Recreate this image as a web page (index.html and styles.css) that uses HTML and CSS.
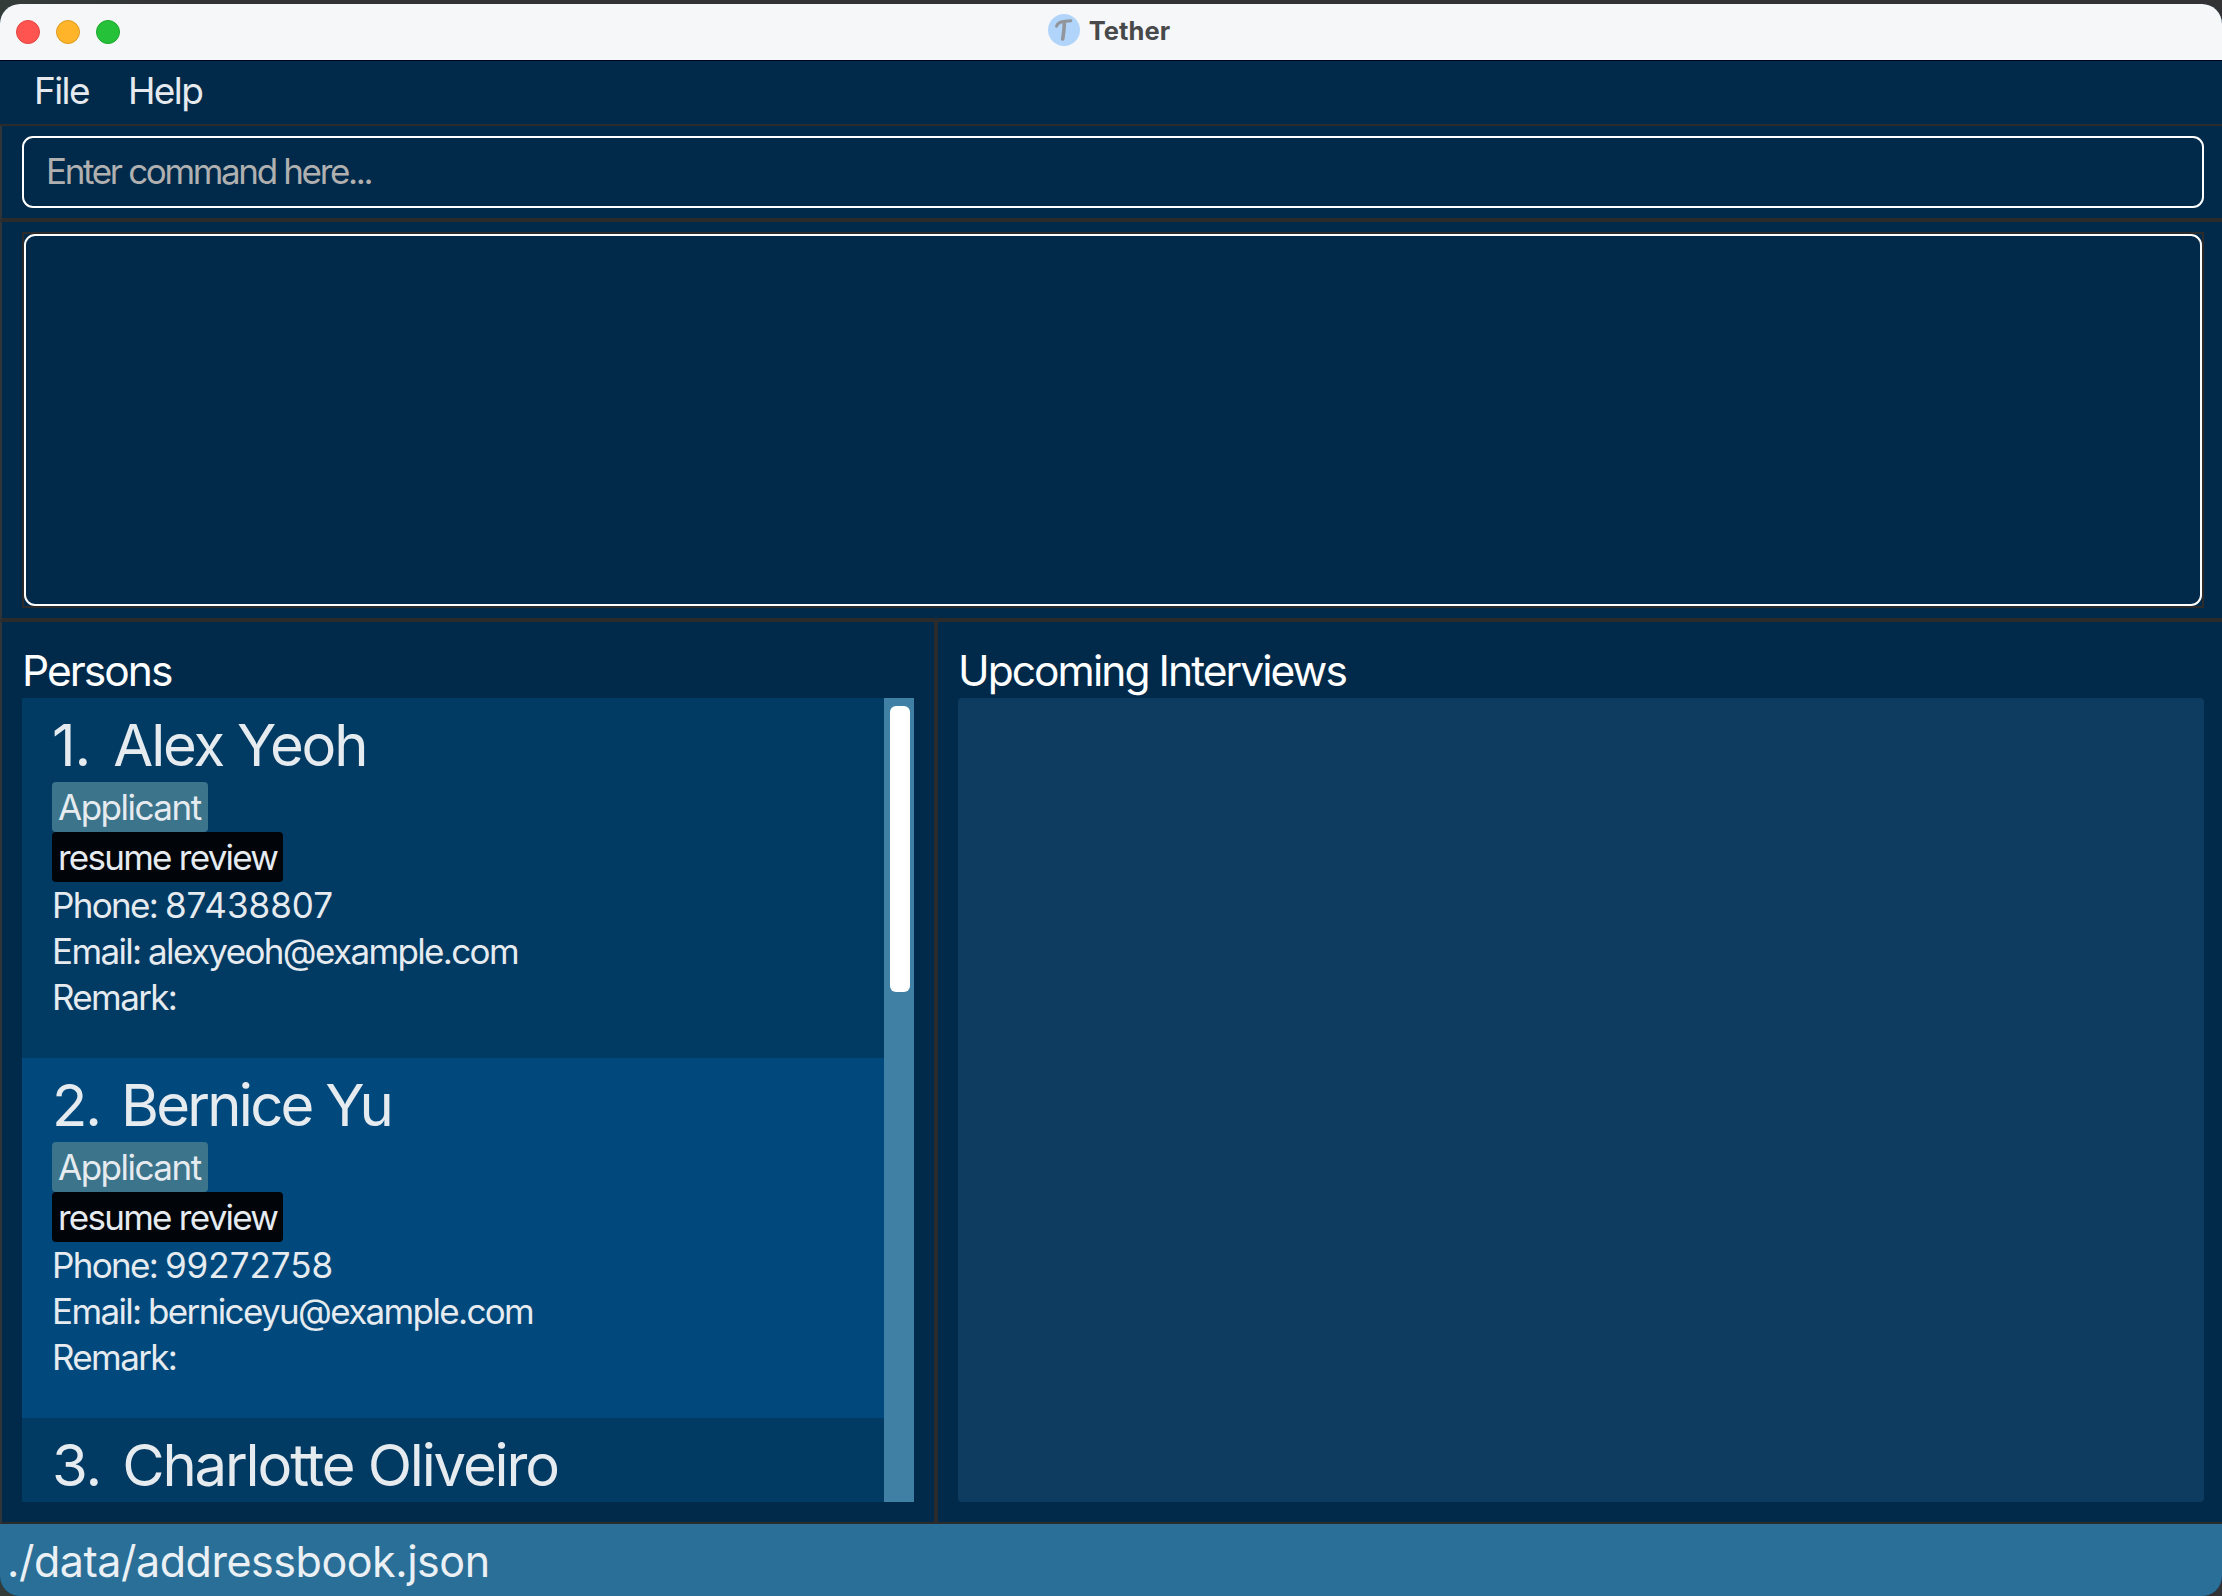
FILE: index.html
```html
<!DOCTYPE html>
<html lang="en">
<head>
<meta charset="utf-8">
<title>Tether</title>
<link rel="stylesheet" href="styles.css">
</head>
<body>
<div class="window">
  <header class="titlebar">
    <div class="lights"><i class="light close"></i><i class="light minimize"></i><i class="light zoom"></i></div>
    <div class="title">
      <svg class="logo" viewBox="0 0 32 32" width="32" height="32" aria-hidden="true">
        <circle cx="16" cy="16" r="16" fill="#b1d4fb"/>
        <path d="M8.600 12.200C9.600 8.800 12.200 7.700 15.600 7.400C18.500 7.200 21 7.100 22.800 6.700" fill="none" stroke="#929599" stroke-width="3" stroke-linecap="round"/>
        <path d="M16.300 8.500C16.300 14.500 15.600 19.500 14.700 25" fill="none" stroke="#929599" stroke-width="3.600" stroke-linecap="round"/>
      </svg>
      <span class="title-text">Tether</span>
    </div>
  </header>
  <nav class="menubar"><span>File</span><span>Help</span></nav>
  <section class="command"><div class="command-field">Enter command here...</div></section>
  <section class="result"><div class="result-frame"><div class="result-box"></div></div></section>
  <main class="panes">
    <section class="pane persons">
      <h2>Persons</h2>
      <div class="list">
        <div class="cards">
          <article class="card">
            <h3><span class="num">1.</span><span>Alex Yeoh</span></h3>
            <span class="tag kind">Applicant</span>
            <span class="tag status">resume review</span>
            <p>Phone: <span class="digits">87438807</span></p>
            <p>Email: alexyeoh@example.com</p>
            <p>Remark:</p>
          </article>
          <article class="card">
            <h3 class="tight"><span class="num">2.</span><span>Bernice Yu</span></h3>
            <span class="tag kind">Applicant</span>
            <span class="tag status">resume review</span>
            <p>Phone: <span class="digits">99272758</span></p>
            <p>Email: berniceyu@example.com</p>
            <p>Remark:</p>
          </article>
          <article class="card">
            <h3 class="close-set"><span class="num">3.</span><span>Charlotte Oliveiro</span></h3>
          </article>
        </div>
        <div class="scrollbar"><div class="thumb"></div></div>
      </div>
    </section>
    <section class="pane interviews">
      <h2>Upcoming Interviews</h2>
      <div class="empty"></div>
    </section>
  </main>
  <footer class="statusbar">./data/addressbook.json</footer>
</div>
</body>
</html>
```
FILE: styles.css
```css
* { box-sizing: border-box; margin: 0; padding: 0; }

body {
  width: 2222px;
  height: 1596px;
  padding-top: 4px;
  overflow: hidden;
  background: linear-gradient(90deg, #343c39 0, #333336 200px);
  font-family: Inter, "Liberation Sans", sans-serif;
  font-weight: 400;
}

.window {
  display: flex;
  flex-direction: column;
  height: 1592px;
  border-radius: 20px;
  overflow: hidden;
  background: #012a4a;
}
.window > * { flex-shrink: 0; }

.titlebar {
  display: grid;
  grid-template-columns: 1fr auto 1fr;
  align-items: center;
  height: 57px;
  background: #f6f7f9;
  border-bottom: 1px solid #02021f;
}

.lights { display: flex; gap: 16px; padding-left: 16px; }
.light { width: 24px; height: 24px; border-radius: 50%; border: 1px solid; }
.close { background: #ff544f; border-color: #e2443f; }
.minimize { background: #ffb429; border-color: #dd9a22; }
.zoom { background: #25c138; border-color: #1da62c; }

.title { display: flex; align-items: center; gap: 9px; padding: 0 4px 4px 0; }
.title-text {
  margin-top: 2px;
  font-size: 25.5px;
  font-weight: 700;
  line-height: 34px;
  letter-spacing: 0.1px;
  color: #48494a;
}

.menubar {
  display: flex;
  gap: 39px;
  height: 65px;
  padding-left: 34px;
  border-bottom: 2px solid #2b2b2b;
  font-size: 37px;
  line-height: 60px;
  letter-spacing: -1.6px;
  color: #e6eaef;
}

.command {
  height: 96px;
  padding: 10px 18px 10px 20px;
  border-left: 2px solid #2f3538;
  border-bottom: 4px solid #2b2b2b;
}
.command-field {
  height: 72px;
  padding-left: 22px;
  border: 2px solid #fff;
  border-radius: 11px;
  font-size: 35px;
  line-height: 67px;
  letter-spacing: -2.35px;
  color: #b0b0b0;
}

.result {
  height: 400px;
  padding: 10px 18px 10px 20px;
  border-left: 2px solid #2f3538;
  border-bottom: 4px solid #2b2b2b;
}
.result-frame { height: 376px; border: 2px solid #2b2b2b; }
.result-box { height: 372px; border: 2px solid #fff; border-radius: 11px; }

.panes {
  display: flex;
  height: 902px;
  border-left: 2px solid #2f3538;
  border-bottom: 2px solid #2b2b2b;
}
.pane { padding: 21px 20px 20px; }
.persons { width: 936px; border-right: 4px solid #2b2b2b; }
.interviews { flex: 1; padding-right: 18px; }

h2 {
  height: 55px;
  font-size: 42.5px;
  font-weight: 400;
  line-height: 55px;
  letter-spacing: -1.95px;
  color: #fff;
}

.list { display: flex; height: 804px; overflow: hidden; }
.cards { flex: 1; overflow: hidden; }
.card {
  display: flex;
  flex-direction: column;
  align-items: flex-start;
  height: 360px;
  padding: 13px 0 0 30px;
  background: #013a63;
  color: #e6ebf0;
}
.card:nth-child(even) { background: #01497c; }

h3 {
  display: flex;
  gap: 23px;
  margin-bottom: 3px;
  font-size: 58px;
  font-weight: 400;
  line-height: 68px;
  letter-spacing: -2.15px;
  white-space: nowrap;
}
.num { letter-spacing: -1px; }
.tight { gap: 21px; letter-spacing: -2.75px; }
.tight .num { letter-spacing: -2px; }
.close-set { gap: 21px; }

.tag {
  height: 50px;
  padding: 0 6px;
  border-radius: 4px;
  font-size: 35px;
  line-height: 50px;
  white-space: nowrap;
}
.kind { width: 156px; letter-spacing: -1.5px; background: #3c758b; }
.status { width: 231px; letter-spacing: -1.75px; background: #010409; }

p {
  font-size: 35px;
  line-height: 46px;
  letter-spacing: -1.65px;
  word-spacing: -0.6px;
  white-space: nowrap;
}
.digits { letter-spacing: 0; }

.scrollbar { width: 30px; padding: 8px 4px 0 6px; background: #4080a5; }
.thumb { height: 286px; border-radius: 6px; background: #fff; }

.empty { height: 804px; border-radius: 4px; background: #0e3b60; }

.statusbar {
  height: 72px;
  padding: 1px 0 0 7px;
  font-size: 43px;
  line-height: 72px;
  letter-spacing: -0.46px;
  background: #2a6f97;
  color: #eaf0f4;
}
```
